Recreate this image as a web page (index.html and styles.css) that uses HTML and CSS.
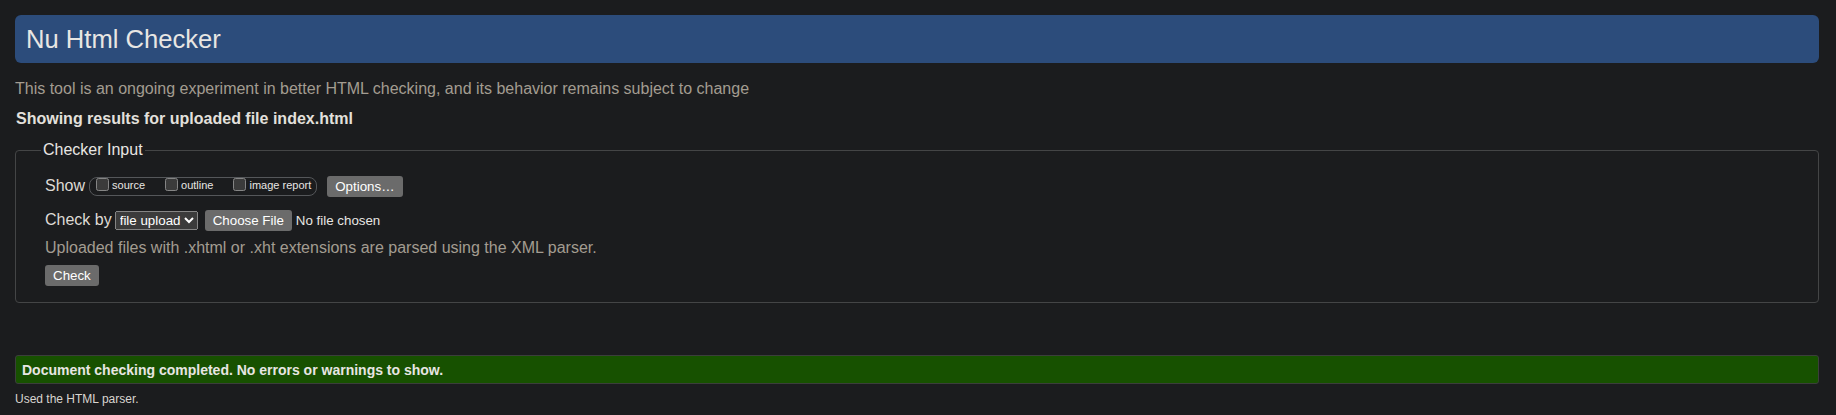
FILE: index.html
```html
<!DOCTYPE html>
<html lang="en">
<head>
<meta charset="utf-8">
<title>Showing results for uploaded file index.html - Nu Html Checker</title>
<link rel="stylesheet" href="styles.css">
</head>
<body>
<h1 class="title">Nu Html Checker</h1>
<p class="intro">This tool is an ongoing experiment in better HTML checking, and its behavior remains subject to change</p>
<p class="showing">Showing results for uploaded file index.html</p>
<form class="checker">
  <fieldset class="input-box">
    <legend class="input-legend">Checker Input</legend>
    <div class="row show-row">
      <span class="row-label">Show</span>
      <span class="opts">
        <label class="opt"><input type="checkbox" class="cb"><span class="opt-text">source</span></label>
        <label class="opt"><input type="checkbox" class="cb"><span class="opt-text">outline</span></label>
        <label class="opt"><input type="checkbox" class="cb"><span class="opt-text">image report</span></label>
      </span>
      <button type="button" class="btn opts-btn">Options…</button>
    </div>
    <div class="row by-row">
      <span class="row-label">Check by</span>
      <select class="by-select"><option>file upload</option></select>
      <input type="file" class="file">
    </div>
    <p class="note">Uploaded files with .xhtml or .xht extensions are parsed using the XML parser.</p>
    <div class="row check-row"><button type="button" class="btn">Check</button></div>
  </fieldset>
</form>
<p class="success">Document checking completed. No errors or warnings to show.</p>
<p class="parser">Used the HTML parser.</p>
</body>
</html>
```

FILE: styles.css
```css
html {
  background: #1b1c1e;
  color-scheme: dark;
}

body {
  margin: 0;
  padding: 15px 17px 0 15px;
  background: #1b1c1e;
  color: #e8e6e3;
  font-family: "Liberation Sans", Arial, sans-serif;
}

.title {
  margin: 0;
  padding: 9px 11px;
  background: #2c4c7b;
  border-radius: 6px;
  font-size: 25.6px;
  font-weight: normal;
  line-height: 30px;
  color: #e8e6e3;
}

.intro {
  margin: 17px 0 0;
  font-size: 16px;
  line-height: 18px;
  color: #a39c91;
}

.showing {
  margin: 12px 0 0 1px;
  font-size: 16px;
  line-height: 18px;
  font-weight: bold;
  color: #e3e0dc;
}

.checker {
  margin: 13px 0 0;
}

.input-box {
  margin: 0;
  min-width: 0;
  border: 1px solid #444546;
  border-radius: 4px;
  padding: 0 0 16px 25px;
}

.input-legend {
  padding: 0 2px;
  font-size: 16px;
  line-height: 18px;
  color: #e8e6e3;
}

.row {
  display: flex;
  align-items: center;
  height: 21px;
  padding-left: 4px;
}

.show-row {
  margin-top: 17px;
}

.by-row {
  margin-top: 13px;
}

.check-row {
  margin-top: 8px;
}

.row-label {
  align-self: flex-start;
  margin-top: 1px;
  font-size: 16px;
  line-height: 18px;
  color: #dedad5;
}

.opts {
  display: inline-flex;
  align-items: flex-start;
  box-sizing: border-box;
  height: 19px;
  margin-left: 4px;
  padding: 0 5px 0 6px;
  border: 1px solid #55575a;
  border-radius: 8px;
}

.opt {
  display: inline-flex;
  align-items: flex-start;
  margin-right: 20px;
}

.opt:last-child {
  margin-right: 0;
}

.cb {
  width: 13px;
  height: 13px;
  margin: 0 3px 0 0;
}

.opt-text {
  padding-top: 1px;
  font-size: 11px;
  line-height: 13px;
  color: #e8e6e3;
}

.btn {
  font-family: "Liberation Sans", Arial, sans-serif;
  font-size: 13.333px;
  color: #ffffff;
  background: #6b6b6b;
  border: 2px solid #6b6b6b;
  border-radius: 3px;
  padding: 1px 6px;
  height: 21px;
  line-height: 15px;
}

.opts-btn {
  margin-left: 10px;
}

.by-select {
  margin-left: 3px;
  height: 19px;
  font-family: "Liberation Sans", Arial, sans-serif;
  font-size: 13.333px;
  color: #ffffff;
}

.file {
  margin-left: 7px;
  font-family: "Liberation Sans", Arial, sans-serif;
  font-size: 13.333px;
  color: #e8e6e3;
}

.file::file-selector-button {
  font-family: "Liberation Sans", Arial, sans-serif;
  font-size: 13.333px;
  color: #ffffff;
  background: #6b6b6b;
  border: 2px solid #6b6b6b;
  border-radius: 3px;
  padding: 1px 6px;
  height: 21px;
  margin-right: 4px;
}

.note {
  margin: 8px 0 0;
  padding-left: 4px;
  font-size: 16px;
  line-height: 18px;
  color: #a39c91;
}

.success {
  margin: 52px 0 0;
  padding: 6px 6px 5px;
  background: #175100;
  border: 1px solid #3b3e3b;
  border-radius: 3px;
  font-size: 14px;
  line-height: 16px;
  font-weight: bold;
  color: #e8e6e3;
}

.parser {
  margin: 8px 0 0;
  font-size: 12px;
  line-height: 14px;
  color: #d9d5d0;
}
```
